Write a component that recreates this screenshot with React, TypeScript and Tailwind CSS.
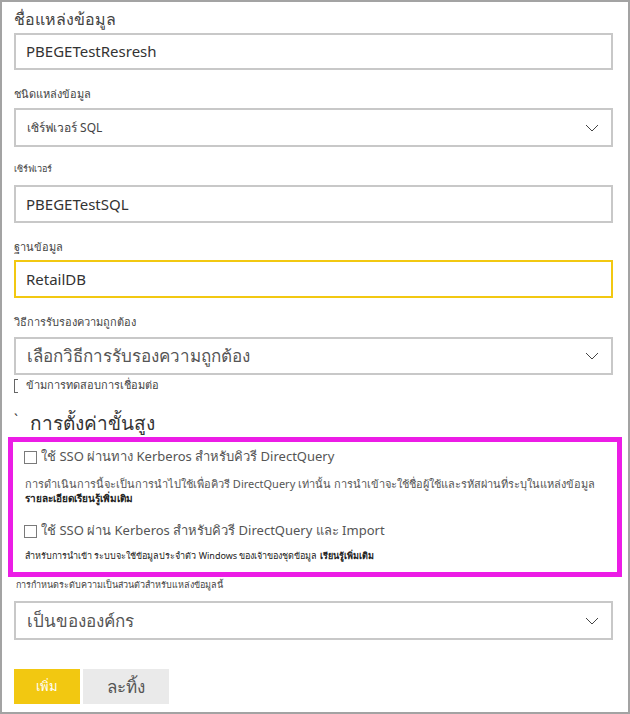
import React from 'react';

const font = { fontFamily: '"Noto Sans", "Open Sans", Tahoma, sans-serif' };

function Chevron() {
    return (
        <svg width="14" height="8" viewBox="0 0 14 8" className="shrink-0">
            <polyline points="1,1 7,7 13,1" fill="none" stroke="#444" strokeWidth="1" />
        </svg>
    );
}

function Box() {
    return <div className="w-[13px] h-[13px] border border-[#7a7a7a] bg-white shrink-0" />;
}

export default function App() {
    return (
        <div
            className="w-[630px] h-[714px] border-2 border-[#a3a3a3] bg-white pl-3 pr-[15px] text-[#333]"
            style={font}
        >
            <div className="pt-[7px] h-[31px] text-[16px] leading-[20px] text-[#444]">ชื่อแหล่งข้อมูล</div>
            <div className="h-[37px] border-2 border-[#c8c8c8] flex items-center pl-[10px] text-[15px]">
                PBEGETestResresh
            </div>

            <div className="pt-[16px] h-[38px] text-[11px] leading-[16px] text-[#444]">ชนิดแหล่งข้อมูล</div>
            <div className="h-[39px] border-2 border-[#c8c8c8] flex items-center justify-between pl-[11px] pr-[12px] text-[12px] text-[#444]">
                <span>เซิร์ฟเวอร์ SQL</span>
                <Chevron />
            </div>

            <div className="pt-[15px] h-[38px] text-[9px] leading-[14px] text-[#444]">เซิร์ฟเวอร์</div>
            <div className="h-[38px] border-2 border-[#c8c8c8] flex items-center pl-[10px] text-[15px]">
                PBEGETestSQL
            </div>

            <div className="pt-[16px] h-[37px] text-[11px] leading-[16px] text-[#444]">ฐานข้อมูล</div>
            <div className="h-[38px] border-2 border-[#f2c811] flex items-center pl-[10px] text-[15px]">
                RetailDB
            </div>

            <div className="pt-[16px] h-[39px] text-[11px] leading-[16px] text-[#444]">วิธีการรับรองความถูกต้อง</div>
            <div className="h-[38px] border-2 border-[#c8c8c8] flex items-center justify-between pl-[11px] pr-[12px] text-[17px] text-[#555]">
                <span>เลือกวิธีการรับรองความถูกต้อง</span>
                <Chevron />
            </div>

            <div className="flex items-center gap-[8px] h-[17px] mt-[2px]">
                <div className="w-[4px] h-[14px] border-l border-t border-b border-[#666]" />
                <span className="text-[11px] text-[#444]">ข้ามการทดสอบการเชื่อมต่อ</span>
            </div>

            <div className="flex items-center h-[28px] mt-[15px] text-[19px] text-[#333]">
                <span className="w-[16px] text-[14px] self-start">`</span>
                <span>การตั้งค่าขั้นสูง</span>
            </div>

            <div className="-ml-[6px] w-[614px] h-[140px] border-[5px] border-[#ec1ce6] pl-[11px] pr-[6px] pt-[8px]">
                <div className="flex items-center gap-[4px] h-[14px] text-[13px] text-[#555]">
                    <Box />
                    <span>ใช้ SSO ผ่านทาง Kerberos สำหรับคิวรี DirectQuery</span>
                </div>
                <div className="mt-[12px] pl-[1px] text-[11px] leading-[15px] text-[#555]">
                    การดำเนินการนี้จะเป็นการนำไปใช้เพื่อคิวรี DirectQuery เท่านั้น การนำเข้าจะใช้ชื่อผู้ใช้และรหัสผ่านที่ระบุในแหล่งข้อมูล
                </div>
                <div className="pl-[1px] text-[10px] leading-[14px] font-bold text-[#222]">รายละเอียดเรียนรู้เพิ่มเติม</div>
                <div className="flex items-center gap-[4px] h-[14px] mt-[19px] text-[13px] text-[#555]">
                    <Box />
                    <span>ใช้ SSO ผ่าน Kerberos สำหรับคิวรี DirectQuery และ Import</span>
                </div>
                <div className="mt-[11px] pl-[1px] text-[9px] leading-[13px] text-[#222]">
                    สำหรับการนำเข้า ระบบจะใช้ข้อมูลประจำตัว Windows ของเจ้าของชุดข้อมูล <span className="font-bold">เรียนรู้เพิ่มเติม</span>
                </div>
            </div>

            <div className="pt-[1px] h-[24px] pl-[2px] text-[9px] leading-[14px] text-[#444]">
                การกำหนดระดับความเป็นส่วนตัวสำหรับแหล่งข้อมูลนี้
            </div>
            <div className="h-[39px] border-2 border-[#c8c8c8] flex items-center justify-between pl-[11px] pr-[12px] text-[17px] text-[#555]">
                <span>เป็นขององค์กร</span>
                <Chevron />
            </div>

            <div className="flex gap-[3px] mt-[29px]">
                <button className="w-[66px] h-[35px] bg-[#f2c811] text-white text-[13px]">เพิ่ม</button>
                <button className="w-[86px] h-[35px] bg-[#eaeaea] text-[#555] text-[17px]">ละทิ้ง</button>
            </div>
        </div>
    );
}
